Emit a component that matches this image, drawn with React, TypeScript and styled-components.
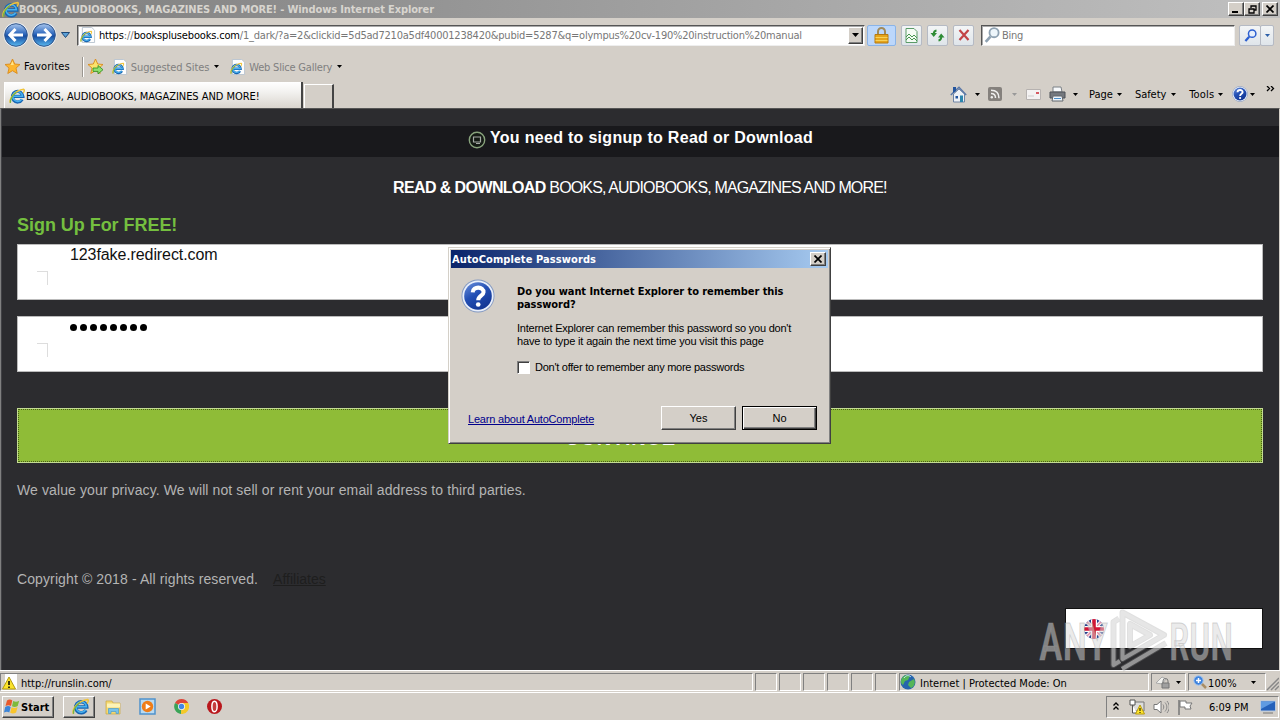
import React from "react";
import styled, { createGlobalStyle } from "styled-components";

const Global = createGlobalStyle`
  * { box-sizing: border-box; }
  body { margin: 0; background: #d4d0c8; overflow: hidden; }
`;

const ui = `"DejaVu Sans Condensed", "DejaVu Sans", sans-serif`;
const arial = `"Liberation Sans", Arial, sans-serif`;
const face = "#d4cfc8";

const Screen = styled.div`
  position: relative;
  width: 1280px;
  height: 720px;
  display: flex;
  flex-direction: column;
  background: ${face};
  font: 11px/14px ${ui};
  font-stretch: condensed;
  color: #000;
  overflow: hidden;
`;

const Label = styled.span<{ $ls?: number; $c?: string; $b?: boolean; $ml?: number; $s?: number; $pt?: number }>`
  white-space: pre;
  flex: none;
  letter-spacing: ${(p) => p.$ls ?? 0}px;
  color: ${(p) => p.$c ?? "inherit"};
  font-weight: ${(p) => (p.$b ? 700 : 400)};
  font-size: ${(p) => p.$s ?? 11}px;
  margin-left: ${(p) => p.$ml ?? 0}px;
  padding-top: ${(p) => p.$pt ?? 2}px;
`;

const Icon = styled.svg<{ $ml?: number }>`
  flex: none;
  display: block;
  margin-left: ${(p) => p.$ml ?? 0}px;
`;

const TitleBar = styled.div`
  height: 18px;
  flex: none;
  display: flex;
  align-items: center;
  padding: 0 2px 0 2px;
  background: linear-gradient(90deg, #7e7e7e, #c0c0c0);
`;

const Push = styled.div`
  flex: 1;
`;

const CaptionButton = styled.div<{ $ml?: number }>`
  width: 16px;
  height: 14px;
  margin-left: ${(p) => p.$ml ?? 0}px;
  background: ${face};
  border: 1px solid;
  border-color: #fff #404040 #404040 #fff;
  box-shadow: inset -1px -1px #808080;
  display: flex;
  align-items: center;
  justify-content: center;
`;

const AddressRow = styled.div`
  height: 34px;
  flex: none;
  display: flex;
  align-items: center;
  padding-left: 3px;
`;

const Field = styled.div<{ $w: number; $ml: number }>`
  width: ${(p) => p.$w}px;
  height: 21px;
  margin-left: ${(p) => p.$ml}px;
  flex: none;
  display: flex;
  align-items: center;
  background: #fff;
  border: 1px solid;
  border-color: #555 #eee #eee #555;
  box-shadow: inset 1px 1px #aaa;
  padding-left: 2px;
`;

const Combo = styled.div`
  width: 15px;
  height: 17px;
  margin-right: 1px;
  background: ${face};
  border: 1px solid;
  border-color: #fff #404040 #404040 #fff;
  box-shadow: inset -1px -1px #808080;
  display: flex;
  align-items: center;
  justify-content: center;
`;

const ToolButton = styled.div<{ $w: number; $ml: number; $lock?: boolean }>`
  width: ${(p) => p.$w}px;
  height: 21px;
  margin-left: ${(p) => p.$ml}px;
  border: 1px solid ${(p) => (p.$lock ? "#8ab4e8" : "#b5bac4")};
  border-radius: 2px;
  background: ${(p) => (p.$lock ? "#bcd7fb" : "linear-gradient(#f3f5f6, #dfe5ea)")};
  display: flex;
  align-items: center;
  justify-content: center;
`;

const FavoritesRow = styled.div`
  height: 29px;
  flex: none;
  display: flex;
  align-items: center;
  padding-left: 4px;
`;

const Divider = styled.div`
  width: 2px;
  height: 20px;
  margin-left: 12px;
  border-left: 1px solid #9a9690;
  border-right: 1px solid #fff;
`;

const TabRow = styled.div`
  height: 27px;
  flex: none;
  display: flex;
  align-items: flex-end;
  padding-left: 4px;
`;

const Tab = styled.div`
  width: 299px;
  height: 26px;
  display: flex;
  align-items: center;
  padding: 2px 0 0 4px;
  background: linear-gradient(#fff, #f4f3f1 35%, #d9d5ce);
  border-left: 1px solid #fff;
  border-right: 2px solid #444;
`;

const NewTab = styled.div`
  width: 30px;
  height: 24px;
  margin-left: 1px;
  border: 1px solid #fff;
  border-right: 2px solid #444;
  border-bottom: 0;
`;

const CommandBar = styled.div`
  flex: 1;
  height: 27px;
  display: flex;
  align-items: center;
  padding-bottom: 1px;
`;

const Page = styled.main`
  height: 562px;
  flex: none;
  background: #2c2c2f;
  border-left: 1px solid #808080;
  border-right: 1px solid #d4d0c8;
  border-top: 1px solid #555;
  box-shadow: inset 1px 0 #404044;
  font-family: ${arial};
  padding-top: 17px;
  display: flex;
  flex-direction: column;
`;

const Notice = styled.div`
  height: 31px;
  flex: none;
  margin: 0 0 0 1px;
  background: #19191c;
  display: flex;
  padding: 4px 0 0 466px;
  color: #fff;
  line-height: 16px;
`;

const Heading = styled.h1`
  margin: 22px 0 0 392px;
  font: 400 16px/18px ${arial};
  letter-spacing: -0.86px;
  color: #fff;
  white-space: nowrap;

  b {
    letter-spacing: -0.6px;
  }
`;

const SignUp = styled.h2`
  margin: 18px 0 0 16px;
  font: 700 18px/20px ${arial};
  letter-spacing: -0.04px;
  color: #74bf3f;
`;

const Input = styled.div<{ $mt: number }>`
  height: 56px;
  flex: none;
  margin: ${(p) => p.$mt}px 16px 0 16px;
  background: #fff;
  border: 1px solid #bbb;
  display: flex;
  padding: 0 0 0 19px;
  font: 16px/19px ${arial};
  letter-spacing: -0.1px;
  color: #111;
`;

const Corner = styled.div`
  width: 11px;
  height: 14px;
  margin: 26px 22px 0 0;
  border-top: 1px solid #ddd;
  border-right: 1px solid #ddd;
`;

const Dots = styled.div`
  display: flex;
  gap: 3px;
  margin-top: 7px;
`;

const Dot = styled.i`
  width: 7px;
  height: 7px;
  border-radius: 4px;
  background: #000;
`;

const Submit = styled.button`
  height: 55px;
  flex: none;
  margin: 36px 16px 0 16px;
  padding: 5px 39px 0 0;
  border: 1px solid #c4dc94;
  outline: 1px dotted #496018;
  outline-offset: -2px;
  background: #8fbc37;
  color: #fff;
  font: 700 20px/22px ${arial};
  letter-spacing: 0.8px;
`;

const Note = styled.p<{ $mt: number }>`
  margin: ${(p) => p.$mt}px 0 0 16px;
  font: 14px/16px ${arial};
  color: #b4b4b4;
  white-space: pre;
  letter-spacing: 0.11px;
`;

const Affiliates = styled.a`
  color: #1e1e1e;
  text-decoration: underline;
  margin-left: 15px;
  letter-spacing: 0;
`;

const Language = styled.div`
  width: 198px;
  height: 41px;
  flex: none;
  align-self: flex-end;
  margin: 21px 16px 0 0;
  background: #fff;
  border: 1px solid #111;
  padding: 10px 0 0 18px;
`;

const StatusBar = styled.div`
  height: 23px;
  flex: none;
  display: flex;
  border-top: 1px solid #fff;
  border-bottom: 1px solid #fff;
  padding-top: 2px;
`;

const Pane = styled.div<{ $w: number; $pl?: number }>`
  width: ${(p) => p.$w}px;
  height: 18px;
  flex: none;
  display: flex;
  align-items: center;
  margin-right: 2px;
  padding-left: ${(p) => p.$pl ?? 0}px;
  border: 1px solid;
  border-color: #808080 #fff #fff #808080;
`;

const TaskBar = styled.div`
  height: 26px;
  flex: none;
  display: flex;
  align-items: center;
  padding: 1px 1px 0 2px;
`;

const Raised = styled.div<{ $w: number; $ml?: number; $pl?: number }>`
  width: ${(p) => p.$w}px;
  height: 22px;
  margin-left: ${(p) => p.$ml ?? 0}px;
  padding-left: ${(p) => p.$pl ?? 0}px;
  display: flex;
  align-items: center;
  border: 1px solid;
  border-color: #fff #404040 #404040 #fff;
  box-shadow: inset -1px -1px #808080;
`;

const Tray = styled.div`
  width: 173px;
  height: 22px;
  display: flex;
  align-items: center;
  border: 1px solid;
  border-color: #808080 #fff #fff #808080;
`;

const Dialog = styled.section`
  position: absolute;
  left: 448px;
  top: 247px;
  width: 383px;
  height: 197px;
  background: ${face};
  border: 1px solid;
  border-color: #d4d0c8 #404040 #404040 #d4d0c8;
  box-shadow: inset 1px 1px #fff, inset -1px -1px #808080;
  padding: 2px;
`;

const DialogTitle = styled.div`
  height: 18px;
  display: flex;
  align-items: center;
  padding: 0 2px 0 1px;
  background: linear-gradient(90deg, #0a246a, #a6caf0);
`;

const DialogBody = styled.div`
  display: flex;
  padding: 11px 0 0 10px;
`;

const Copy = styled.div`
  margin-left: 22px;
  padding-top: 6px;
  font: 11px/13px ${arial};
`;

const Line = styled.div<{ $ls: number; $b?: boolean; $mt?: number }>`
  margin-top: ${(p) => p.$mt ?? 0}px;
  font: ${(p) => (p.$b ? 700 : 400)} 11px/13px ${(p) => (p.$b ? ui : arial)};
  font-stretch: condensed;
  letter-spacing: ${(p) => p.$ls}px;
  white-space: pre;
`;

const CheckRow = styled.label`
  display: flex;
  align-items: center;
  gap: 5px;
  margin-top: 13px;
`;

const CheckBox = styled.span`
  width: 13px;
  height: 13px;
  background: #fff;
  border: 1px solid;
  border-color: #808080 #fff #fff #808080;
  box-shadow: inset 1px 1px #404040;
`;

const Actions = styled.div`
  display: flex;
  align-items: center;
  padding: 32px 11px 0 17px;
`;

const Learn = styled.a`
  flex: 1;
  font: 11px/13px ${arial};
  letter-spacing: -0.2px;
  color: #00008b;
  text-decoration: underline;
  padding-top: 2px;
`;

const DialogButton = styled.button<{ $default?: boolean }>`
  width: 75px;
  height: 24px;
  margin-left: 6px;
  padding: 0;
  background: ${face};
  border: 1px solid;
  border-color: ${(p) => (p.$default ? "#000" : "#fff #404040 #404040 #fff")};
  box-shadow: ${(p) =>
    p.$default ? "inset 1px 1px #fff, inset -1px -1px #404040, inset -2px -2px #808080" : "inset -1px -1px #808080"};
  font: 11px/13px ${arial};
`;

const Watermark = styled.svg`
  position: absolute;
  left: 1034px;
  top: 604px;
`;

const Arrow = ({ ml, c = "#000" }: { ml?: number; c?: string }) => (
  <Icon $ml={ml} width="5" height="3" viewBox="0 0 5 3"><path d="M0 0h5L2.5 3z" fill={c} /></Icon>
);

const Explorer = ({ ml, size = 17, page }: { ml?: number; size?: number; page?: boolean }) => (
  <Icon $ml={ml} width={size} height={size} viewBox="0 0 17 17">
    {page && <path d="M2.5 .5h10l3 3v13h-13z" fill="#fdfdfd" stroke="#b9c4d0" />}
    <g transform={page ? "translate(0 3.5) scale(.76)" : undefined}>
      <path d="M14 12.2A5.6 5.6 0 1 1 14.8 9H5" fill="none" stroke="#1766b3" strokeWidth="3.4" />
      <path d="M13.6 11.8A5.2 5.2 0 1 1 14.4 8.8H5" fill="none" stroke="#49b2ef" strokeWidth="1.6" />
      <path d="M1.5 15.8C-.6 12 6 2.5 15.6 1.4c1.2.6.6 2.6-.6 4" fill="none" stroke="#f0c43a" strokeWidth="1.5" />
      <path d="M1.5 15.8C1 12 4 7 8 4.5" fill="none" stroke="#77b443" strokeWidth="1.3" />
    </g>
  </Icon>
);

const NavButton = ({ ml, back }: { ml?: number; back?: boolean }) => (
  <Icon $ml={ml} width="26" height="26" viewBox="0 0 26 26">
    <defs>
      <linearGradient id="nav" x2="0" y2="1">
        <stop stopColor="#a9c7ee" /><stop offset=".45" stopColor="#2e68bd" /><stop offset=".55" stopColor="#174da2" /><stop offset="1" stopColor="#5bbaf0" />
      </linearGradient>
    </defs>
    <circle cx="13" cy="13" r="12.5" fill="#eef2f7" />
    <circle cx="13" cy="13" r="11.3" fill="url(#nav)" stroke="#2d5288" />
    <path transform={back ? undefined : "matrix(-1 0 0 1 26 0)"} d="M12.5 7 6.8 13l5.7 6M7.5 13H20" fill="none" stroke="#fff" strokeWidth="3" />
  </Icon>
);

const Star = ({ ml, add }: { ml?: number; add?: boolean }) => (
  <Icon $ml={ml} width="17" height="17" viewBox="0 0 17 17">
    <path d="m8.500 1 2.200 5 5.300.5-4 3.600 1.200 5.400-4.700-2.800-4.700 2.800L5 10.100 1 6.500 6.300 6z" fill={add ? "#fbe36c" : "#fdb62f"} stroke="#d98a1c" strokeWidth=".9" />
    {add && <path d="M6 10h5V7.500l5 4.200-5 4.200v-2.500H6z" fill="#8fe070" stroke="#2c8a20" strokeWidth=".8" />}
    {!add && <path d="m8.500 3 1.300 4H6.500z" fill="#ffe58a" />}
  </Icon>
);

const Lens = ({ c, fill, size = 14, ml }: { c: string; fill: string; size?: number; ml?: number }) => (
  <Icon $ml={ml} width={size} height={size} viewBox="0 0 14 14">
    <path d="M1.5 13 5.6 8.400" stroke={c} strokeWidth="2.4" />
    <circle cx="8.8" cy="5" r="4" fill={fill} stroke={c} strokeWidth="1.6" />
  </Icon>
);

const Help = ({ size, ml }: { size: number; ml?: number }) => (
  <Icon $ml={ml} width={size} height={size} viewBox="0 0 32 32">
    <defs><linearGradient id="help" x2=".6" y2="1"><stop stopColor="#6d92dc" /><stop offset=".5" stopColor="#2450b5" /><stop offset="1" stopColor="#123694" /></linearGradient></defs>
    <circle cx="16" cy="16" r="15.5" fill="#8298c0" />
    <circle cx="16" cy="16" r="14.7" fill="#e9effa" />
    <circle cx="16" cy="16" r="13" fill="url(#help)" />
    <path d="M11 12.5c.3-6 10.5-5.700 10.200 0-.2 3.200-5 3.300-5 7.500" fill="none" stroke="#fff" strokeWidth="3.8" />
    <circle cx="16.2" cy="24" r="2.2" fill="#fff" />
  </Icon>
);

const Flag = () => (
  <Icon width="20" height="20" viewBox="0 0 20 20">
    <defs><clipPath id="round"><circle cx="10" cy="10" r="10" /></clipPath></defs>
    <g clipPath="url(#round)">
      <path d="M0 0h20v20H0z" fill="#24418c" />
      <path d="m0 0 20 20M20 0 0 20" stroke="#f4dfe8" strokeWidth="4" />
      <path d="m0 0 20 20M20 0 0 20" stroke="#e08aa4" strokeWidth="1.2" />
      <path d="M10 0v20M0 10h20" stroke="#fff" strokeWidth="6" />
      <path d="M10 0v20M0 10h20" stroke="#d21536" strokeWidth="3.6" />
    </g>
  </Icon>
);

const Close = () => (
  <Icon width="8" height="8" viewBox="0 0 8 8"><path d="m.5.5 7 7M7.500.5l-7 7" stroke="#000" strokeWidth="1.700" /></Icon>
);

const PlayMark = ({ stroke, opacity, width }: { stroke: string; opacity: number; width: number }) => (
  <path
    d="M85 14.500 79.500 18V61L86 57M88.500 8.500 130 31 88.500 55zM96 20v22.500L116 31zM88 65 132 39"
    fill="none" stroke={stroke} strokeOpacity={opacity} strokeWidth={width} strokeLinejoin="round"
  />
);

export default function App() {
  return (
    <Screen>
      <Global />
      <TitleBar>
        <Explorer />
        <Label $b $c="#d8d5cf" $ls={-0.13}>BOOKS, AUDIOBOOKS, MAGAZINES AND MORE! - Windows Internet Explorer</Label>
        <Push />
        <CaptionButton><Icon width="8" height="8"><path d="M0 6h6v2H0z" /></Icon></CaptionButton>
        <CaptionButton>
          <Icon width="9" height="9" viewBox="0 0 9 9"><path d="M3 3V1h5v4H6M1 4h5v4H1zM3 .8h5M1 4h5" fill="none" stroke="#000" strokeWidth="1.3" /></Icon>
        </CaptionButton>
        <CaptionButton $ml={2}><Close /></CaptionButton>
      </TitleBar>

      <AddressRow>
        <NavButton back />
        <NavButton ml={2} />
        <Icon $ml={4} width="9" height="6" viewBox="0 0 9 6"><path d="M.5.5h8l-4 5z" fill="#5aa0d8" stroke="#1d4775" /></Icon>
        <Field $w={788} $ml={7}>
          <Explorer page size={16} />
          <Label $ml={3} $ls={-0.17}>https<Label $c="#777">://</Label>booksplusebooks.com</Label>
          <Label $c="#777" $ls={-0.22}>/1_dark/?a=2&clickid=5d5ad7210a5df40001238420&pubid=5287&q=olympus%20cv-190%20instruction%20manual</Label>
          <Push />
          <Combo><Icon width="7" height="4"><path d="M0 0h7L3.5 4z" /></Icon></Combo>
        </Field>
        <ToolButton $w={29} $ml={2} $lock>
          <Icon width="15" height="17" viewBox="0 0 15 17">
            <path d="M4 8V4.500a3.500 3.500 0 0 1 7 0V8" fill="none" stroke="#a08a5c" strokeWidth="2" />
            <path d="M1 7.500h13V16H1z" fill="#e5a51c" stroke="#b67a12" /><path d="M1.500 10.500h12M1.500 13.500h12" stroke="#f8d25a" />
          </Icon>
        </ToolButton>
        <ToolButton $w={21} $ml={5}>
          <Icon width="13" height="15" viewBox="0 0 13 15"><path d="M1 .5h8l3 3v11H1z" fill="#f4fbf4" stroke="#5b9b68" /><path d="m1 9 3-3 3 3 2-2 3 3M1 12l3-3 3 3 2-2 3 3" fill="none" stroke="#469650" /></Icon>
        </ToolButton>
        <ToolButton $w={21} $ml={5}>
          <Icon width="15" height="13" viewBox="0 0 15 13">
            <path d="M.5 4h6.500L3.700 8zM8 8.500h6.500L11.200 4.500z" fill="#2f8c36" />
            <path d="M6.500 1.500C4.500 1.800 3.800 3 3.700 5M8.500 11.500c2-.3 2.700-1.500 2.700-3.500" fill="none" stroke="#2f8c36" strokeWidth="2" />
          </Icon>
        </ToolButton>
        <ToolButton $w={21} $ml={5}>
          <Icon width="12" height="12" viewBox="0 0 12 12"><path d="m1.500 1 9 10M10.500 1l-9 10" stroke="#c34446" strokeWidth="2.2" /></Icon>
        </ToolButton>
        <Field $w={254} $ml={7}>
          <Lens c="#8fa2b2" fill="#eef6fb" size={16} />
          <Label $ml={2} $c="#777" $ls={-0.3}>Bing</Label>
        </Field>
        <ToolButton $w={22} $ml={4}><Lens c="#2c5fd0" fill="#e6effc" size={13} /></ToolButton>
        <ToolButton $w={14} $ml={-1}><Arrow c="#2c5fa8" /></ToolButton>
      </AddressRow>

      <FavoritesRow>
        <Star />
        <Label $ml={3} $ls={0.13} $pt={0}>Favorites</Label>
        <Divider />
        <Star ml={3} add />
        <Explorer ml={8} page size={16} />
        <Label $ml={3} $ls={-0.1} $c="#808080">Suggested Sites</Label>
        <Arrow ml={5} />
        <Explorer ml={11} page size={16} />
        <Label $ml={3} $ls={-0.2} $c="#808080">Web Slice Gallery</Label>
        <Arrow ml={5} />
      </FavoritesRow>

      <TabRow>
        <Tab>
          <Explorer size={16} />
          <Label $ml={1} $ls={-0.05}>BOOKS, AUDIOBOOKS, MAGAZINES AND MORE!</Label>
        </Tab>
        <NewTab />
        <CommandBar>
          <Icon $ml={616} width="17" height="17" viewBox="0 0 17 17">
            <path d="M3.500 8v8h11V8L9 3z" fill="#eef1f6" stroke="#6e83a4" /><path d="M.8 9 9 1.300 16.200 9" fill="none" stroke="#5a78a8" strokeWidth="1.5" /><path d="M3 1h3v4L3 7z" fill="#24559e" /><path d="M5.500 10h2.500v2.500H5.500z" fill="#24559e" /><path d="M10 9.500h3V16h-3z" fill="#2c86ae" />
          </Icon>
          <Arrow ml={8} />
          <Icon $ml={8} width="14" height="14" viewBox="0 0 14 14"><rect width="14" height="14" rx="2" fill="#85817d" /><path d="M3 6.500c3 0 4.500 1.500 4.500 4.500M3 3.200c5 0 8 3 8 8" fill="none" stroke="#eee" strokeWidth="1.5" /><circle cx="3.8" cy="10.3" r="1.2" fill="#eee" /></Icon>
          <Arrow ml={10} c="#999" />
          <Icon $ml={9} width="15" height="11"><path d="M.5.5h14v10H.5z" fill="#f4f2f2" stroke="#b6b2b0" /><path d="M10 3h3v2h-3z" fill="#d65a62" /><path d="M2 7h6" stroke="#ccc" /></Icon>
          <Icon $ml={8} width="17" height="16" viewBox="0 0 17 16"><path d="M4 1h8l1 5H4z" fill="#f7f9fb" stroke="#7b8086" /><path d="M1 6h15v6H1z" fill="#74787e" stroke="#4c5056" /><path d="M4 10h9l1 5H3z" fill="#eef4fa" stroke="#61666c" /><path d="M5 12.500h7" stroke="#4b8ec9" /></Icon>
          <Arrow ml={7} />
          <Label $ml={11} $ls={0}>Page</Label><Arrow ml={4} />
          <Label $ml={13} $ls={-0.05}>Safety</Label><Arrow ml={5} />
          <Label $ml={13} $ls={0.15}>Tools</Label><Arrow ml={4} />
          <Help size={16} ml={9} /><Arrow ml={2} />
          <Icon $ml={11} width="9" height="16"><path d="m1 0 2.500 2.500L1 5M5 0 7.500 2.500 5 5" fill="none" stroke="#000" strokeWidth="1.3" /></Icon>
        </CommandBar>
      </TabRow>

      <Page>
        <Notice>
          <Icon width="18" height="20" viewBox="0 0 18 20">
            <circle cx="9" cy="10" r="7.7" fill="#141a14" stroke="#88a37c" strokeWidth="1.4" /><path d="M5.500 7h7v5h-7zM8 13.500h4" fill="none" stroke="#a5aaa5" strokeWidth="1.2" />
          </Icon>
          <Label $b $s={16} $ml={4} $ls={0.3} $pt={0}>You need to signup to Read or Download</Label>
        </Notice>
        <Heading><b>READ &amp; DOWNLOAD</b> BOOKS, AUDIOBOOKS, MAGAZINES AND MORE!</Heading>
        <SignUp>Sign Up For FREE!</SignUp>
        <Input $mt={9}><Corner />123fake.redirect.com</Input>
        <Input $mt={16}><Corner /><Dots>{Array.from({ length: 8 }, (_, i) => <Dot key={i} />)}</Dots></Input>
        <Submit>CONTINUE</Submit>
        <Note $mt={19}>We value your privacy. We will not sell or rent your email address to third parties.</Note>
        <Note $mt={73}>Copyright © 2018 - All rights reserved.<Affiliates>Affiliates</Affiliates></Note>
        <Language><Flag /></Language>
      </Page>

      <StatusBar>
        <Pane $w={753} $pl={1}>
          <Icon width="16" height="16" viewBox="0 0 16 16"><path d="M3 0h12v15H3z" fill="#fff" /><path d="m7 3 6.500 12H.5z" fill="#fbe32b" stroke="#b29a10" /><path d="M7 7v4M7 12.500v1.500" stroke="#000" strokeWidth="1.5" /></Icon>
          <Label $ml={3} $ls={-0.05} $pt={3}>http://runslin.com/</Label>
        </Pane>
        {[0, 1, 2, 3, 4, 5].map((i) => <Pane key={i} $w={22} />)}
        <Pane $w={250} $pl={0}>
          <Icon width="16" height="16" viewBox="0 0 16 16"><circle cx="8" cy="8" r="7.5" fill="#2664ad" /><path d="M2 4c3-4 7-3 8-2L8 6l-3 1-2 4C0 9 1 6 2 4M9 8l5-3c2 4 0 8-3 9l-3-3z" fill="#54b557" /><path d="M4 4c2-3 5-3 7-1" stroke="#c8e6f6" fill="none" /></Icon>
          <Label $ml={4} $ls={0} $pt={3}>Internet | Protected Mode: On</Label>
        </Pane>
        <Pane $w={35} $pl={3}>
          <Icon width="16" height="16" viewBox="0 0 16 16"><path d="m1 9 6-6 4 2-4 5z" fill="#f1f1ee" stroke="#aaa" /><path d="M8 9V7a2.500 2.500 0 0 1 5 0v2" fill="none" stroke="#777" /><path d="M7 9h7v5H7z" fill="#a0a0a0" stroke="#777" /></Icon>
          <Arrow ml={5} />
        </Pane>
        <Pane $w={78} $pl={4}>
          <Icon width="14" height="14" viewBox="0 0 14 14"><path d="m8 8 5 5" stroke="#a98d64" strokeWidth="2.5" /><circle cx="5.5" cy="5.5" r="4.7" fill="#3f83dc" stroke="#a5c8f2" /><path d="M5.500 3v5M3 5.500h5" stroke="#fff" strokeWidth="1.5" /></Icon>
          <Label $ml={1} $ls={0.1} $pt={3}>100%</Label>
          <Arrow ml={14} />
        </Pane>
        <Icon width="13" height="18" $ml={-2}><path d="M1 17 13 5M5 17l8-8M9 17l4-4" stroke="#888" strokeWidth="1.5" /></Icon>
      </StatusBar>

      <TaskBar>
        <Raised $w={52} $pl={1}>
          <Icon width="17" height="17" viewBox="0 0 17 17"><path d="M3 2.500C5 1 7 1.500 8.300 2.500L7 8C5.500 7 3.500 7 1.500 8z" fill="#e8592b" /><path d="M9.200 3c2 1 4 1 6-.3L13.700 8c-2 1.300-4 1.300-5.700.3z" fill="#7eba3b" /><path d="M1.200 9c2-1.300 4-1.200 5.500 0l-1.400 5.500C3.800 13.500 2 13.500 0 14.500z" fill="#3c85d8" /><path d="M7.600 9.300c2 1 4 1 6-.3l-1.500 5.500c-2 1.300-4 1.300-5.900.3z" fill="#f9c52c" /></Icon>
          <Label $b $s={11} $ls={0.05}>Start</Label>
        </Raised>
        <Raised $w={32} $ml={9} $pl={8}><Explorer size={17} /></Raised>
        <Icon $ml={10} width="17" height="17" viewBox="0 0 17 17"><path d="M1 3h6l1 2h7v11H1z" fill="#f3d872" stroke="#caa640" strokeWidth=".7" /><path d="M2 5.500h13v4H2z" fill="#fdf3b7" /><path d="M3.500 15.500v-5h10v5h-2.500v-2h-5v2z" fill="#77c2ea" stroke="#4a9ccb" strokeWidth=".7" /></Icon>
        <Icon $ml={17} width="17" height="17" viewBox="0 0 17 17"><path d="M1 1h15v15H1z" fill="#b9daf1" stroke="#4f93cb" strokeWidth="1.5" /><circle cx="8.5" cy="8.5" r="5.7" fill="#ef7d18" /><path d="m6.700 5.500 5 3-5 3z" fill="#fff" /></Icon>
        <Icon $ml={18} width="15" height="15" viewBox="0 0 15 15"><path d="M7.500 7.500 1 4a7.500 7.500 0 0 1 13.200 0z" fill="#dd4638" /><path d="M7.500 7.500 1 4a7.500 7.500 0 0 0 6 11z" fill="#3aa457" /><path d="M7.500 7.500V4h6.700A7.500 7.500 0 0 1 7 15z" fill="#f4c928" /><circle cx="7.5" cy="7.5" r="3.5" fill="#f4f7fa" /><circle cx="7.5" cy="7.5" r="2.7" fill="#4287e6" /></Icon>
        <Icon $ml={18} width="15" height="15" viewBox="0 0 15 15"><circle cx="7.5" cy="7.5" r="7.5" fill="#b9171c" /><ellipse cx="7.5" cy="7.5" rx="2.6" ry="5.3" fill="#c63d3d" stroke="#fff" strokeWidth="1.5" /></Icon>
        <Push />
        <Tray>
          <Icon $ml={6} width="6" height="9"><path d="m.5 3.500 2.500-2.500L5.500 3.500M.5 7.500 3 5l2.500 2.500" fill="none" stroke="#000" strokeWidth="1.3" /></Icon>
          <Icon $ml={10} width="17" height="16" viewBox="0 0 17 16"><path d="M4 3h11v9H4z" fill="#ddd" stroke="#777" /><path d="M1 1h5v5H1zM3.500 6v8H8" fill="#fff" stroke="#555" /><path d="m11 6 4.500 9h-9z" fill="#ffe52a" stroke="#b79a10" /><path d="M11 9v3m0 1v1" stroke="#000" /></Icon>
          <Icon $ml={7} width="16" height="16" viewBox="0 0 16 16"><path d="M1 5.500h3L8 2v12L4 10.500H1z" fill="#fff" stroke="#777" /><path d="M10 5.500c1 1.500 1 3.500 0 5M12 3.500c2.500 3 2.500 6 0 9M14 2c3 4 3 8 0 12" fill="none" stroke="#888" /></Icon>
          <Icon $ml={8} width="17" height="16" viewBox="0 0 17 16"><path d="M2 1v15" stroke="#777" strokeWidth="1.5" /><path d="M3 2h6v2h6l-2 3 1 3H8V8H3z" fill="#fff" stroke="#777" /></Icon>
          <Label $ml={15} $ls={-0.05}>6:09 PM</Label>
          <Icon $ml={11} width="16" height="14" viewBox="0 0 16 14"><path d="M.5 1h15v10H.5z" fill="#2461ba" stroke="#b8c9de" /><path d="M1 1.500h14L1 9z" fill="#5f9be2" /><path d="M3 13h10" stroke="#777" /></Icon>
        </Tray>
      </TaskBar>

      <Dialog>
        <DialogTitle>
          <Label $b $c="#fff" $ls={0.1}>AutoComplete Passwords</Label>
          <Push />
          <CaptionButton><Close /></CaptionButton>
        </DialogTitle>
        <DialogBody>
          <Help size={34} />
          <Copy>
            <Line $b $ls={-0.07}>Do you want Internet Explorer to remember this{"\n"}password?</Line>
            <Line $ls={-0.24} $mt={11}>Internet Explorer can remember this password so you don't</Line>
            <Line $ls={-0.15}>have to type it again the next time you visit this page</Line>
            <CheckRow><CheckBox /><Line $ls={-0.26}>Don't offer to remember any more passwords</Line></CheckRow>
          </Copy>
        </DialogBody>
        <Actions>
          <Learn>Learn about AutoComplete</Learn>
          <DialogButton>Yes</DialogButton>
          <DialogButton $default>No</DialogButton>
        </Actions>
      </Dialog>

      <Watermark width="230" height="72" viewBox="0 0 230 72">
        <g fill="#d8d8d8" fillOpacity=".5" stroke="#999" strokeOpacity=".4" strokeWidth="1" fontFamily="Roboto, sans-serif" fontWeight="500" fontSize="52">
          <text x="5" y="56" textLength="69" lengthAdjust="spacingAndGlyphs">ANY</text>
          <text x="135" y="56" textLength="64" lengthAdjust="spacingAndGlyphs">RUN</text>
        </g>
        <PlayMark stroke="#999" opacity={0.3} width={6} />
        <PlayMark stroke="#eee" opacity={0.45} width={4} />
      </Watermark>
    </Screen>
  );
}
